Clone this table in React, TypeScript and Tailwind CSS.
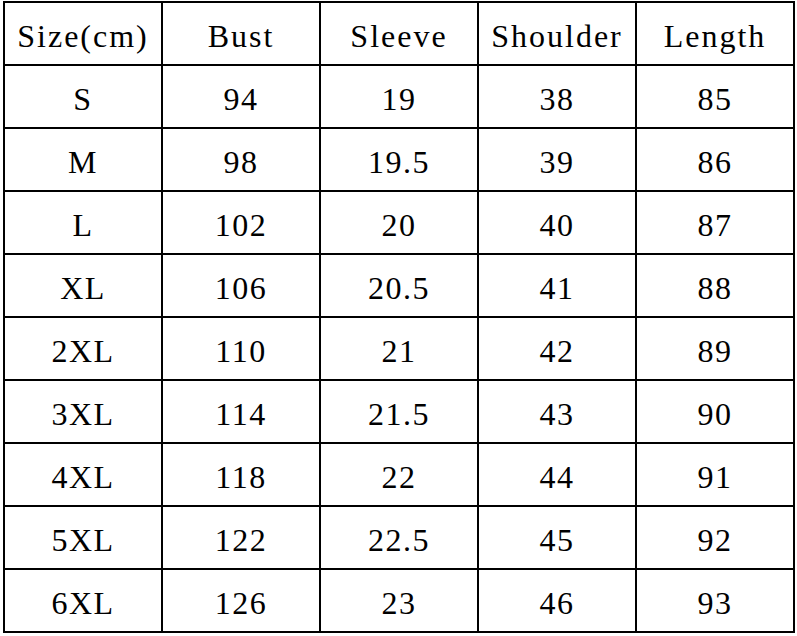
const HEADERS = ["Size(cm)", "Bust", "Sleeve", "Shoulder", "Length"];

const ROWS = [
  ["S", "94", "19", "38", "85"],
  ["M", "98", "19.5", "39", "86"],
  ["L", "102", "20", "40", "87"],
  ["XL", "106", "20.5", "41", "88"],
  ["2XL", "110", "21", "42", "89"],
  ["3XL", "114", "21.5", "43", "90"],
  ["4XL", "118", "22", "44", "91"],
  ["5XL", "122", "22.5", "45", "92"],
  ["6XL", "126", "23", "46", "93"],
];

function Cell({ text, header }: { text: string; header?: boolean }) {
  return (
    <div
      className={
        "flex h-[63px] items-center justify-center border-r-2 border-b-2 border-black pt-[4px] text-[32px] leading-none text-black " +
        (header ? "tracking-[2px]" : "tracking-[1.5px]")
      }
    >
      {text}
    </div>
  );
}

export default function App() {
  return (
    <div
      className="h-[636px] w-[797px] overflow-hidden bg-white pl-[3px] pt-[1px]"
      style={{ fontFamily: '"Liberation Serif", "Noto Sans CJK SC", serif' }}
    >
      <div className="grid w-[792px] grid-cols-[158px_158px_158px_158px_158px] border-l-2 border-t-2 border-black">
        {HEADERS.map((h) => (
          <Cell key={h} text={h} header />
        ))}
        {ROWS.map((row, r) =>
          row.map((v, c) => <Cell key={r + "-" + c} text={v} />)
        )}
      </div>
    </div>
  );
}
